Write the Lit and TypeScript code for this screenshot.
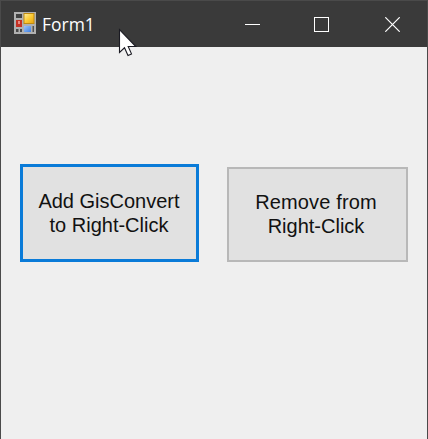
import { LitElement, html, css } from "lit";
import { customElement } from "lit/decorators.js";

@customElement("title-bar")
class TitleBar extends LitElement {
  static styles = css`
    :host { display: flex; height: 46px; background: #3a3a3a; color: #fff; }
    svg { display: block; }
    .brand { display: flex; flex: 1; padding: 11px 0 0 13px; }
    .title {
      font: 18px/24px "Open Sans", "Noto Sans", sans-serif;
      margin-left: 6px;
      transform: scaleX(0.97);
      transform-origin: 0 0;
    }
    .controls { display: flex; }
    .control { width: 70px; height: 46px; border: 0; padding: 0; background: none; display: grid; place-items: center; }
    .maximize { padding-right: 2px; }
  `;
  render() {
    return html`
      <div class="brand">
        <svg width="22" height="22" viewBox="0 0 22 22">
          <defs>
            <linearGradient id="y" x2="1" y2="1"><stop stop-color="#fff0a0"/><stop offset=".5" stop-color="#fccb35"/><stop offset="1" stop-color="#e5a00c"/></linearGradient>
            <linearGradient id="b" x2="1" y2="1"><stop stop-color="#9cc4fa"/><stop offset="1" stop-color="#3f7fe0"/></linearGradient>
          </defs>
          <rect width="22" height="22" fill="#b0b0b0"/>
          <rect x="2" y="2" width="6" height="4" fill="#404040"/>
          <rect x="10" y="1.500" width="10" height="10" fill="url(#y)" stroke="#c08a10"/>
          <rect x="2" y="8" width="6" height="7" fill="#c43024"/>
          <rect x="4" y="9" width="2" height="3" fill="#e98a80"/>
          <rect x="2" y="17" width="2.500" height="3" fill="#484848"/>
          <rect x="6" y="17" width="2" height="3" fill="#484848"/>
          <rect x="10" y="14" width="7" height="6" fill="url(#b)"/>
          <rect x="18.500" y="14" width="1.500" height="6" fill="#505050"/>
        </svg>
        <span class="title">Form1</span>
      </div>
      <div class="controls">
        <button class="control" aria-label="Minimize">
          <svg width="15" height="15"><path d="M0 7.500H15" stroke="#fff"/></svg>
        </button>
        <button class="control maximize" aria-label="Maximize">
          <svg width="15" height="15"><rect x=".5" y=".5" width="14" height="14" fill="none" stroke="#fff"/></svg>
        </button>
        <button class="control" aria-label="Close">
          <svg width="15" height="15"><path d="M.3 .3L14.700 14.700M14.700 .3L.3 14.700" stroke="#fff" stroke-width="1.200"/></svg>
        </button>
      </div>
    `;
  }
}

@customElement("app-root")
class AppRoot extends LitElement {
  static styles = css`
    :host {
      display: flex; flex-direction: column; position: relative;
      box-sizing: border-box; height: 439px; overflow: hidden;
      border: 1px solid #4a4a4a; border-bottom: 0; background: #efefef;
    }
    .client { display: flex; align-items: flex-end; gap: 28px; height: 215px; padding-left: 19px; }
    .action {
      box-sizing: border-box; margin: 0; padding: 0 3px 2px 0;
      background: #e1e1e1; color: #111;
      font: 20px/24px "Liberation Sans", Arial, sans-serif;
      border: 2px solid #b8b8b8; width: 181px; height: 95px;
    }
    .wide { letter-spacing: 0.14px; }
    .focused { border: 3px solid #0a7bd8; width: 179px; height: 98px; padding: 0 1px 1px 0; }
    .pointer { position: absolute; left: 117px; top: 27px; }
  `;
  render() {
    return html`
      <title-bar></title-bar>
      <div class="client">
        <button class="action focused">Add GisConvert<br />to Right-Click</button>
        <button class="action"><span class="wide">Remove from</span><br />Right-Click</button>
      </div>
      <svg class="pointer" width="20" height="30" viewBox="0 0 20 30">
        <path d="M1.500 1.500V24.500L6.500 19.800L10 27.500L13.500 25.900L10.200 18.500H17.800Z" fill="#fff" stroke="#1a1a22" stroke-width="1.100"/>
      </svg>
    `;
  }
}
